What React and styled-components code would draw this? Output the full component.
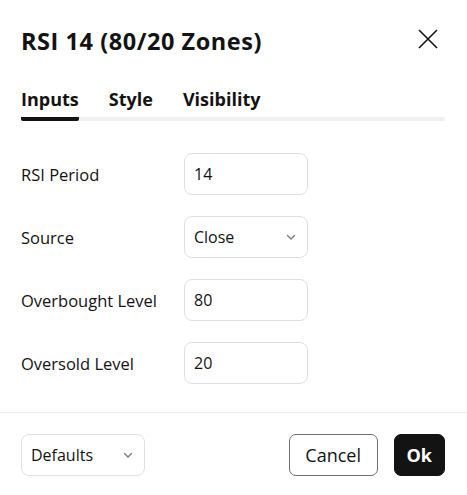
import React from "react";
import styled, { createGlobalStyle } from "styled-components";

const Global = createGlobalStyle`
  body {
    margin: 0;
    background: #fff;
    font-family: "Open Sans", "Noto Sans", sans-serif;
    color: #131313;
  }
`;

const Dialog = styled.div`
  width: 467px;
  height: 495px;
  display: flex;
  flex-direction: column;
  box-sizing: border-box;
`;

const Header = styled.div`
  display: flex;
  align-items: center;
  justify-content: space-between;
  padding: 24px 29px 0 21px;
  height: 34px;
`;

const Title = styled.h1`
  margin: 0;
  font-size: 23.5px;
  font-weight: 700;
  letter-spacing: 0.55px;
`;

const CloseBtn = styled.button`
  border: 0;
  background: none;
  padding: 0;
  margin-bottom: 4px;
  display: flex;
  cursor: pointer;
`;

const Tabs = styled.div`
  margin: 29px 22px 0 21px;
  display: flex;
  gap: 30px;
  border-bottom: 4px solid #f0f0f0;
  border-radius: 2px;
`;

const Tab = styled.div`
  font-size: 18px;
  font-weight: 700;
  padding-bottom: 6px;
  margin-bottom: -4px;
  border-bottom: 4px solid ${(p) => (p.active ? "#131313" : "transparent")};
  border-radius: 2px;
`;

const Body = styled.div`
  padding: 32px 21px 0 21px;
  display: flex;
  flex-direction: column;
  gap: 21px;
  flex: 1;
`;

const Row = styled.div`
  display: flex;
  align-items: center;
`;

const Label = styled.div`
  width: 163px;
  font-size: 16.5px;
`;

const Field = styled.div`
  width: 124px;
  height: 42px;
  box-sizing: border-box;
  border: 1px solid #e0e0e0;
  border-radius: 8px;
  display: flex;
  align-items: center;
  justify-content: space-between;
  padding: 0 10px 0 9px;
  font-size: 16px;
`;

const Footer = styled.div`
  border-top: 1px solid #ececec;
  display: flex;
  align-items: center;
  padding: 21px 22px 19px 21px;
  gap: 16px;
`;

const Spacer = styled.div`
  flex: 1;
`;

const Button = styled.button`
  height: 42px;
  box-sizing: border-box;
  border-radius: 7px;
  font-family: inherit;
  font-size: 18px;
  padding: 0 ${(p) => (p.primary ? "12px" : "15.5px")};
  border: 1px solid ${(p) => (p.primary ? "#131313" : "#6f6f6f")};
  background: ${(p) => (p.primary ? "#131313" : "#fff")};
  color: ${(p) => (p.primary ? "#fff" : "#131313")};
  font-weight: ${(p) => (p.primary ? 700 : 400)};
`;

const Chevron = () => (
  <svg width="12" height="12" viewBox="0 0 12 12" fill="none">
    <path d="M2.5 4.5L6 8l3.5-3.5" stroke="#777" strokeWidth="1.3" strokeLinecap="round" strokeLinejoin="round" />
  </svg>
);

const fields = [
  { label: "RSI Period", value: "14" },
  { label: "Source", value: "Close", select: true },
  { label: "Overbought Level", value: "80" },
  { label: "Oversold Level", value: "20" },
];

export default function App() {
  return (
    <Dialog>
      <Global />
      <Header>
        <Title>RSI 14 (80/20 Zones)</Title>
        <CloseBtn>
          <svg width="20" height="20" viewBox="0 0 20 20">
            <path d="M1 1L19 19M19 1L1 19" stroke="#131313" strokeWidth="1.6" />
          </svg>
        </CloseBtn>
      </Header>
      <Tabs>
        <Tab active>Inputs</Tab>
        <Tab>Style</Tab>
        <Tab>Visibility</Tab>
      </Tabs>
      <Body>
        {fields.map((f) => (
          <Row key={f.label}>
            <Label>{f.label}</Label>
            <Field>
              {f.value}
              {f.select && <Chevron />}
            </Field>
          </Row>
        ))}
      </Body>
      <Footer>
        <Field>
          Defaults
          <Chevron />
        </Field>
        <Spacer />
        <Button>Cancel</Button>
        <Button primary>Ok</Button>
      </Footer>
    </Dialog>
  );
}
